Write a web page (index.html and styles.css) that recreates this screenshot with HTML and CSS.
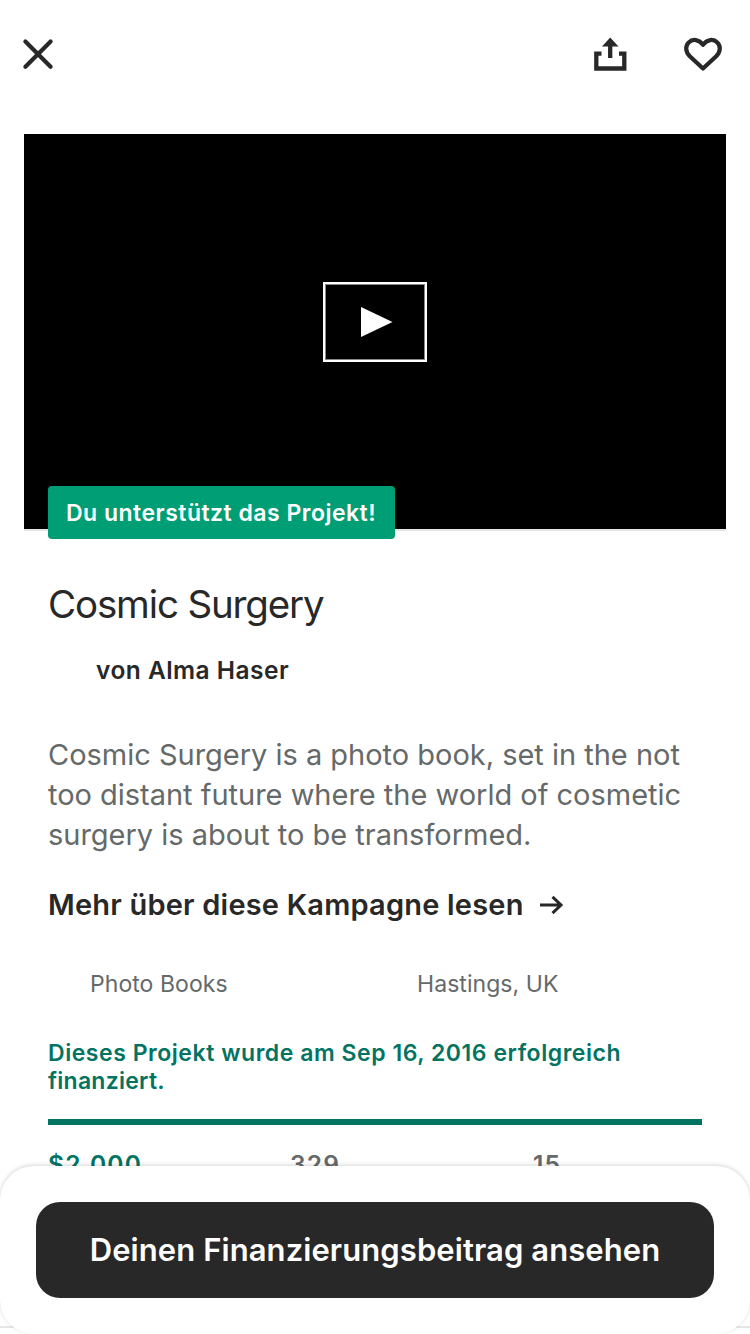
FILE: index.html
```
<!DOCTYPE html>
<html lang="de">
<head>
<meta charset="utf-8">
<title>Cosmic Surgery</title>
<link rel="stylesheet" href="styles.css">
</head>
<body>
<div class="screen">
  <header class="topbar">
    <button class="icon-button" aria-label="Schließen">
      <svg class="icon-close" width="32" height="32" viewBox="0 0 32 32"><path d="M3.400 3.600 28.600 28.800M28.600 3.600 3.400 28.800"/></svg>
    </button>
    <div class="actions">
      <button class="icon-button" aria-label="Teilen">
        <svg class="icon-share" width="34" height="34" viewBox="0 0 34 34"><path class="line" d="M8.500 16.700H3.300V31.500H31.300V16.700H26M17.200 21V8"/><path class="fill" d="M17.200 .5 25.500 9.500H9Z"/></svg>
      </button>
      <button class="icon-button" aria-label="Merken">
        <svg class="icon-heart" width="40" height="36" viewBox="0 0 40 36"><path d="M20 32.500 6.800 20.200C2.200 15.600 2.200 9.800 5.700 6.400 9.600 2.600 16 3.200 20 8.800 24 3.200 30.400 2.600 34.300 6.400 37.800 9.800 37.800 15.600 33.200 20.200Z"/></svg>
      </button>
    </div>
  </header>

  <main class="card">
    <div class="video">
      <button class="play" aria-label="Abspielen">
        <svg width="32" height="30" viewBox="0 0 32 30"><path d="M0 0 31.500 15 0 30Z"/></svg>
      </button>
      <span class="badge">Du unterstützt das Projekt!</span>
    </div>
    <div class="content">
      <h1 class="title">Cosmic Surgery</h1>
      <p class="creator">von Alma Haser</p>
      <p class="blurb">Cosmic Surgery is a photo book, set in the not<br>too distant future where the world of cosmetic<br>surgery is about to be transformed.</p>
      <a class="more">Mehr über diese Kampagne lesen
        <svg width="24" height="20" viewBox="0 0 24 20"><path d="M0 10H21M12.500 1.800 21 10 12.500 18.200"/></svg>
      </a>
      <div class="meta"><span>Photo Books</span><span>Hastings, UK</span></div>
      <p class="status">Dieses Projekt wurde am Sep 16, 2016 erfolgreich <span class="status-end">finanziert.</span></p>
      <div class="progress"></div>
      <div class="stats"><span class="pledged">$2,000</span><span>329</span><span>15</span></div>
    </div>
    <hr class="divider">
  </main>

  <footer class="sheet">
    <button class="cta">Deinen Finanzierungsbeitrag ansehen</button>
  </footer>
</div>
</body>
</html>
```
FILE: styles.css
```
* { box-sizing: border-box; }
body { margin: 0; background: #fff; color: #282828; font-family: Inter, sans-serif; }
h1, p { margin: 0; }
button { border: 0; padding: 0; background: none; font: inherit; }
svg { display: block; }

.screen { position: relative; width: 750px; height: 1334px; overflow: hidden; }

.topbar { display: flex; justify-content: space-between; align-items: center; height: 108px; padding: 0 27px 0 22px; }
.actions { display: flex; align-items: center; gap: 56px; }
.icon-close path { fill: none; stroke: #282828; stroke-width: 4.200; stroke-linecap: round; }
.icon-share .line { fill: none; stroke: #282828; stroke-width: 4.300; }
.icon-share .fill { fill: #282828; }
.icon-heart path { fill: none; stroke: #282828; stroke-width: 4.200; stroke-linejoin: round; }

.card { margin-top: 26px; }
.video { position: relative; display: flex; align-items: center; justify-content: center; height: 397px; margin: 0 24px; padding-bottom: 19px; background: #000; border-bottom: 2px solid #e6e6e6; }
.play { display: flex; align-items: center; width: 104px; height: 80px; padding-left: 36px; border: 2px solid #fff; box-shadow: inset 0 0 0 1px #888; }
.play path { fill: #fff; }
.badge { position: absolute; left: 24px; top: 352px; width: 347px; height: 53px; padding-left: 18px; border-radius: 4px; background: #009e74; color: #fff; font-size: 23px; font-weight: 560; line-height: 54px; letter-spacing: .49px; white-space: nowrap; }

.content { padding: 49px 48px 0; white-space: nowrap; }
.title { font-size: 38.500px; font-weight: 400; line-height: 48px; letter-spacing: -1.140px; }
.creator { margin-top: 26px; padding-left: 48px; font-size: 24.500px; font-weight: 560; line-height: 32px; letter-spacing: .47px; }
.blurb { margin-top: 49px; color: #656969; font-size: 29px; line-height: 40px; letter-spacing: -.015px; }
.more { display: flex; align-items: center; gap: 16px; margin-top: 30px; font-size: 29px; font-weight: 560; line-height: 40px; letter-spacing: .2px; }
.more path { fill: none; stroke: #282828; stroke-width: 3; }
.meta { display: grid; grid-template-columns: 327px 1fr; margin-top: 45px; padding-left: 42px; color: #656969; font-size: 23px; line-height: 28px; letter-spacing: .06px; }
.status { margin-top: 41px; color: #037362; font-size: 23px; font-weight: 560; line-height: 28px; letter-spacing: .545px; }
.status-end { display: block; letter-spacing: .25px; }
.progress { height: 6px; margin-top: 24px; background: #037362; }
.stats { display: grid; grid-template-columns: 242px 243px 1fr; margin-top: 23px; color: #656969; font-size: 24.500px; font-weight: 560; line-height: 32px; letter-spacing: 1.200px; }
.pledged { color: #037362; }
.divider { height: 2px; margin: 146px 0 0; border: 0; background: #e6e6e6; }

.sheet { position: absolute; left: 0; top: 1166px; width: 750px; height: 168px; padding: 36px; border-radius: 34px; background: #fff; box-shadow: 0 -1px 4px rgba(0, 0, 0, .17); }
.cta { display: block; width: 678px; height: 96px; border-radius: 24px; background: #282828; color: #fff; font-size: 31px; font-weight: 560; line-height: 96px; letter-spacing: .08px; text-align: center; white-space: nowrap; }
```
